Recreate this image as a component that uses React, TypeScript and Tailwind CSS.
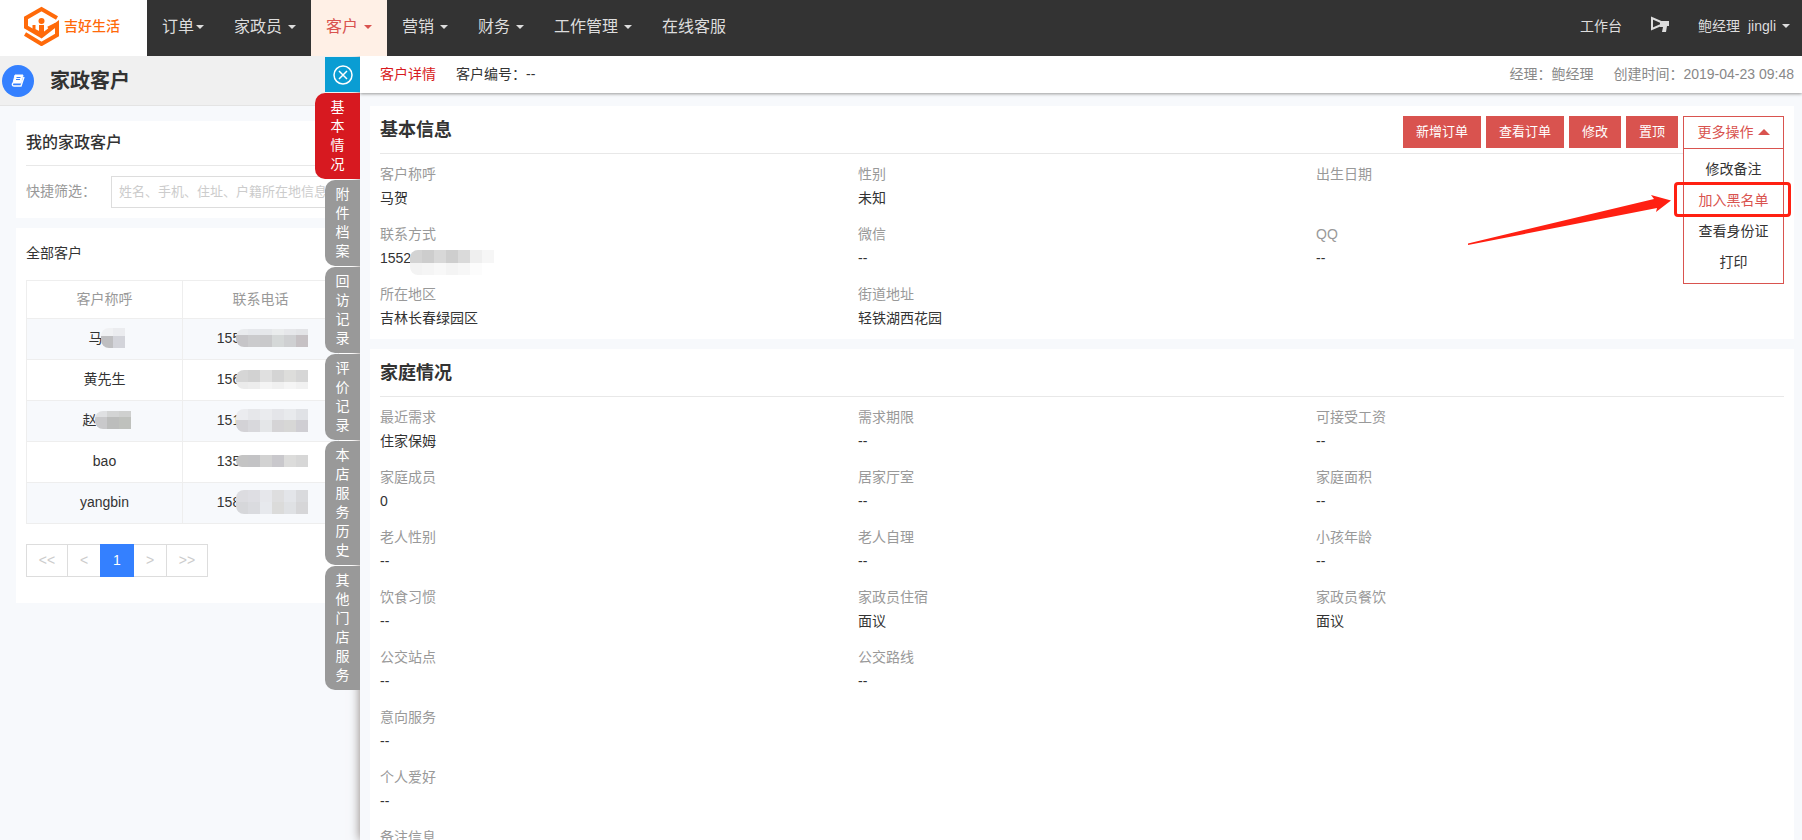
import React from 'react';

const MENUS = [
  { nombre: '订单', caret: true, tight: true },
  { nombre: '家政员', caret: true },
  { nombre: '客户', caret: true, active: true },
  { nombre: '营销', caret: true },
  { nombre: '财务', caret: true },
  { nombre: '工作管理', caret: true },
  { nombre: '在线客服' },
];

const TABS = ['基本情况', '附件档案', '回访记录', '评价记录', '本店服务历史', '其他门店服务'];

// Each mosaic row: height followed by the cell colours, left to right
type MosaicRow = [height: number, ...cells: string[]];

interface Customer {
  name: string;
  nameMask?: MosaicRow[];
  phone: string;
  phoneMask: MosaicRow[];
}

const CUSTOMERS: Customer[] = [
  {
    name: '马',
    nameMask: [[8, '#f0f1f3', '#ebecef'], [12, '#bfbfc1', '#d3d4da']],
    phone: '155',
    phoneMask: [
      [6, '#e9ebee', '#e6e8ec', '#e5e7ea', '#eaeced', '#e6e7ea', '#e3e4e7'],
      [12, '#c6c5c8', '#cbcbcd', '#c9c9cb', '#d5d8d8', '#cfd0d2', '#c6c1c4'],
    ],
  },
  {
    name: '黄先生',
    phone: '156',
    phoneMask: [
      [12, '#d6d6d6', '#d2d2d2', '#e0e0e0', '#d4d4d4', '#dddddb', '#d6d6d6'],
      [7, '#ebebeb', '#ededed', '#f4f4f4', '#f0f0f0', '#f5f5f5', '#f1f1f1'],
    ],
  },
  {
    name: '赵',
    nameMask: [[6, '#dfe0e2', '#d3d4d4', '#cfd0cf'], [12, '#c9c9cb', '#bcbdbc', '#bfc1bd']],
    phone: '151',
    phoneMask: [
      [11, '#ebecef', '#e6e7ea', '#eaebee', '#e4e5e9', '#e8eaed', '#e0e2e6'],
      [12, '#d3d2d6', '#d8d8dc', '#e4e6e8', '#d5d4d6', '#d7d7d6', '#cfced3'],
    ],
  },
  {
    name: 'bao',
    phone: '135',
    phoneMask: [[12, '#c4c4c4', '#c3c3c5', '#d2d2d2', '#c9c8cc', '#dcdcdb', '#d7d7d7']],
  },
  {
    name: 'yangbin',
    phone: '158',
    phoneMask: [
      [12, '#dcdce0', '#dedee3', '#e6e7eb', '#dededf', '#e3e5e9', '#d9dadd'],
      [12, '#d6d7da', '#dadbdf', '#e7e9ed', '#dbdbda', '#dfe1e4', '#d6d6d8'],
    ],
  },
];

const PHONE_MASK: MosaicRow[] = [
  [13, '#d3d3d3', '#cdcdcd', '#d8d8d8', '#cecece', '#dadada', '#efefef', '#f6f6f6'],
  [12, '#f3f3f3', '#f5f5f5', '#f8f8f8', '#f4f4f4', '#f7f7f7', '#fcfcfc'],
];

const ACTIONS = ['新增订单', '查看订单', '修改', '置顶'];
const MORE_ACTIONS = ['修改备注', '加入黑名单', '查看身份证', '打印'];

type Field = [label: string, value: string] | null;

const BASIC: Field[] = [
  ['客户称呼', '马贺'], ['性别', '未知'], ['出生日期', ''],
  ['联系方式', '1552'], ['微信', '--'], ['QQ', '--'],
  ['所在地区', '吉林长春绿园区'], ['街道地址', '轻铁湖西花园'], null,
];

const FAMILY: Field[] = [
  ['最近需求', '住家保姆'], ['需求期限', '--'], ['可接受工资', '--'],
  ['家庭成员', '0'], ['居家厅室', '--'], ['家庭面积', '--'],
  ['老人性别', '--'], ['老人自理', '--'], ['小孩年龄', '--'],
  ['饮食习惯', '--'], ['家政员住宿', '面议'], ['家政员餐饮', '面议'],
  ['公交站点', '--'], ['公交路线', '--'], null,
  ['意向服务', '--'], null, null,
  ['个人爱好', '--'], null, null,
  ['备注信息', '--'], null, null,
];

function Caret() {
  return <span className="ml-0.5 border-x-4 border-t-4 border-x-transparent border-t-current" />;
}

function Logo() {
  return (
    <svg className="w-9 h-10" viewBox="0 0 36 40" fill="none" stroke="#ff6a0a" strokeWidth="4">
      <path d="M33 12 17.500 3 2 12v9l15.500 9L33 18v11l-15.500 9L1 28" />
      <path d="M17.500 19v10" strokeWidth="5" />
      <path d="M10 19v5l6 3M32 18l-8 4" strokeWidth="3" />
      <circle cx="17.500" cy="15" r="3" fill="#ff6a0a" stroke="none" />
    </svg>
  );
}

function TopBar() {
  return (
    <header className="flex h-14 shrink-0 bg-[#333] text-[#ddd]">
      <a href="#home" className="flex w-[147px] shrink-0 items-center gap-1 bg-white pl-6 pb-1 text-sm font-medium text-[#ff6a0a]">
        <Logo />
        吉好生活
      </a>
      <nav className="flex flex-1 text-base">
        {MENUS.map(m => (
          <a
            key={m.nombre}
            href="#menu"
            className={`flex items-center px-[15px] pb-0.5 ${m.tight ? '' : 'gap-1'} ${m.active ? 'bg-[#fff0e6] text-[#d9534f]' : ''}`}
          >
            {m.nombre}
            {m.caret && <Caret />}
          </a>
        ))}
      </nav>
      <div className="flex items-center pr-3 pb-1 text-sm">
        <a href="#desk">工作台</a>
        <button type="button" aria-label="公告" className="mx-7">
          <svg className="w-5 h-5" viewBox="0 0 20 20">
            <path d="M2 2v11l9-4V6z" fill="none" stroke="#ddd" strokeWidth="2" />
            <path d="M10 5h9v5h-2l-1 6h-4l1-5h-3z" fill="#ddd" />
          </svg>
        </button>
        <button type="button" className="flex items-center gap-1">
          <span className="mr-1">鲍经理</span> jingli
          <Caret />
        </button>
      </div>
    </header>
  );
}

function Mosaic({ rows, className }: { rows: MosaicRow[]; className?: string }) {
  const cols = Math.max(...rows.map(r => r.length - 1));
  const height = rows.reduce((sum, r) => sum + r[0], 0);
  let y = 0;
  return (
    <svg className={`shrink-0 rounded-l-lg ${className ?? ''}`} width={cols * 12} height={height} aria-hidden="true">
      {rows.map(([h, ...cells], i) => {
        const top = y;
        y += h;
        return cells.map((fill, j) => <rect key={`${i}-${j}`} x={j * 12} y={top} width="12" height={h} fill={fill} />);
      })}
    </svg>
  );
}

function CustomerList() {
  return (
    <div className="w-[420px]">
      <div className="flex h-[50px] items-center gap-4 border-b border-[#e4e4e4] bg-[#f0f0f0] pl-0.5">
        <span className="flex h-8 w-8 items-center justify-center rounded-full bg-[#3480ff]">
          <svg className="w-4 h-4" viewBox="0 0 16 16" fill="none" stroke="#fff">
            <path d="M5 2h8l-2 8H3z" fill="#fff" />
            <path d="M3 10c-1 1-1 3 1 3h7l3-9" strokeWidth="1.4" />
            <path d="M6.5 4.5h4M6 6.5h4" stroke="#3480ff" />
          </svg>
        </span>
        <h1 className="text-xl font-bold leading-7">家政客户</h1>
      </div>

      <section className="ml-4 mt-[15px] bg-white px-2.5 pb-2.5">
        <h2 className="h-[45px] border-b border-[#e8e8e8] pt-2 text-base font-medium leading-7">我的家政客户</h2>
        <div className="flex items-center pt-2.5">
          <label htmlFor="filter" className="w-[85px] pb-0.5 text-sm text-[#999]">快捷筛选：</label>
          <input
            id="filter"
            type="text"
            placeholder="姓名、手机、住址、户籍所在地信息"
            className="h-8 flex-1 border border-[#ddd] px-[7px] pb-0.5 text-[13px] placeholder:text-[#ccc]"
          />
        </div>
      </section>

      <section className="ml-4 mt-2.5 bg-white px-2.5 pb-[26px] text-sm">
        <h2 className="h-[52px] pt-[13px] leading-6">全部客户</h2>
        <table className="w-[313px] table-fixed border-collapse text-center">
          <thead>
            <tr className="h-[38px] text-[#999]">
              <th className="border border-[#eee] pb-0.5 font-normal">客户称呼</th>
              <th className="border border-[#eee] pb-0.5 font-normal">联系电话</th>
            </tr>
          </thead>
          <tbody>
            {CUSTOMERS.map(c => (
              <tr key={c.phone} className="h-[41px] odd:bg-[#f7f9fc]">
                <td className="border border-[#eee] pb-0.5">
                  <span className="flex items-center justify-center">
                    {c.name}
                    {c.nameMask && <Mosaic rows={c.nameMask} className="-ml-0.5 -mr-1" />}
                  </span>
                </td>
                <td className="border border-[#eee] pb-0.5 pl-1">
                  <span className="flex items-center justify-center">
                    {c.phone}
                    <Mosaic rows={c.phoneMask} className="-ml-1" />
                  </span>
                </td>
              </tr>
            ))}
          </tbody>
        </table>
        <div className="mt-5 flex text-[#ccc]">
          <button type="button" className="h-[33px] w-[42px] border border-[#ddd] pb-0.5">&lt;&lt;</button>
          <button type="button" className="h-[33px] w-8 border-y border-[#ddd] pb-0.5">&lt;</button>
          <button type="button" className="h-[33px] w-[34px] bg-[#3480ff] pb-0.5 font-medium text-white">1</button>
          <button type="button" className="h-[33px] w-8 border-y border-[#ddd] pb-0.5">&gt;</button>
          <button type="button" className="h-[33px] w-[42px] border border-[#ddd] pb-0.5">&gt;&gt;</button>
        </div>
      </section>
    </div>
  );
}

function DrawerTabs() {
  return (
    <div className="flex flex-col items-end gap-px pt-px text-sm text-white">
      <button type="button" aria-label="关闭" className="flex h-[35px] w-[35px] items-center justify-center bg-[#0a9dd3]">
        <svg className="w-5 h-5" viewBox="0 0 20 20" fill="none" stroke="#fff" strokeWidth="1.5">
          <circle cx="10" cy="10" r="9" />
          <path d="m6 6 8 8M14 6l-8 8" />
        </svg>
      </button>
      {TABS.map((tab, i) => (
        <button
          key={tab}
          type="button"
          className={`flex flex-col items-center rounded-l-[10px] py-[5px] leading-[19px] ${i === 0 ? 'w-[45px] bg-[#d71920]' : 'w-[35px] bg-[#999]'}`}
        >
          {tab.split('').map(ch => <span key={ch}>{ch}</span>)}
        </button>
      ))}
    </div>
  );
}

function Fields({ items }: { items: Field[] }) {
  return (
    <dl className="grid grid-cols-[478fr_458fr_468fr] gap-y-3 pt-2 text-sm leading-6">
      {items.map((f, i) => (
        <div key={i}>
          {f && <dt className="text-[#999]">{f[0]}</dt>}
          {f && (
            <dd className="flex h-6">
              {f[1]}
              {f[1] === '1552' && <Mosaic rows={PHONE_MASK} className="mt-1 -ml-px" />}
            </dd>
          )}
        </div>
      ))}
    </dl>
  );
}

function MoreActions() {
  return (
    <div className="relative h-8 w-[101px] text-sm">
      <button type="button" className="flex h-[33px] w-full items-center justify-center gap-1 border border-[#d9534f] pb-0.5 text-[#d9534f]">
        更多操作
        <span className="border-x-[6px] border-b-[6px] border-x-transparent border-b-current" />
      </button>
      <ul className="absolute inset-x-0 top-[33px] z-10 border border-t-0 border-[#d9534f] bg-white pb-1.5 pt-1 text-center">
        {MORE_ACTIONS.map(a => (
          <li key={a}>
            <button type="button" className={`h-[31px] w-full ${a === '加入黑名单' ? 'text-[#d9534f]' : ''}`}>{a}</button>
          </li>
        ))}
      </ul>
      <span className="absolute -left-[9px] -right-[7px] top-[66px] z-20 h-[35px] rounded-sm border-[3px] border-[#ff2012]" />
      <svg className="absolute right-28 top-[78px] z-20 h-[52px] w-[206px]" viewBox="0 0 206 52" fill="#ff2012">
        <path d="M2 49.500 188 5l-3-4 20 5.500L190 18l1-4L2 51z" />
      </svg>
    </div>
  );
}

function Drawer() {
  return (
    <main className="z-10 flex min-w-0 flex-1 flex-col bg-[#f7f9fc] shadow-[0_0_10px_#8a7f7c]">
      <div className="z-10 flex h-[37px] shrink-0 items-center gap-5 bg-white pb-0.5 pl-5 pr-2 text-sm shadow-[0_1px_3px_#999]">
        <span className="text-[#d71920]">客户详情</span>
        <span className="flex-1">客户编号：--</span>
        <span className="text-[#888]">经理：鲍经理</span>
        <span className="text-[#888]">创建时间：2019-04-23 09:48</span>
      </div>
      <div className="min-h-0 flex-1 overflow-hidden pl-2.5 pr-2 pt-[13px]">
        <section className="bg-white px-2.5 pb-[9px]">
          <div className="flex h-12 gap-[5px] border-b border-[#e8e8e8] pt-2.5">
            <h2 className="flex-1 text-lg font-bold leading-7">基本信息</h2>
            {ACTIONS.map(a => (
              <button key={a} type="button" className="h-8 bg-[#d9534f] px-[13px] text-[13px] text-white">{a}</button>
            ))}
            <MoreActions />
          </div>
          <Fields items={BASIC} />
        </section>
        <section className="mt-2.5 bg-white px-2.5 pb-2.5">
          <div className="h-12 border-b border-[#e8e8e8] pt-2.5">
            <h2 className="text-lg font-bold leading-7">家庭情况</h2>
          </div>
          <Fields items={FAMILY} />
        </section>
      </div>
    </main>
  );
}

export default function App() {
  return (
    <div className="flex h-screen flex-col overflow-hidden bg-[#f7f9fc] font-['Liberation_Sans','Noto_Sans_CJK_SC',sans-serif] text-[#333]">
      <TopBar />
      <div className="flex min-h-0 flex-1 overflow-hidden">
        <aside className="relative w-[360px] shrink-0">
          <div className="h-full overflow-hidden">
            <CustomerList />
          </div>
          <div className="absolute right-0 top-0 z-20">
            <DrawerTabs />
          </div>
        </aside>
        <Drawer />
      </div>
    </div>
  );
}
